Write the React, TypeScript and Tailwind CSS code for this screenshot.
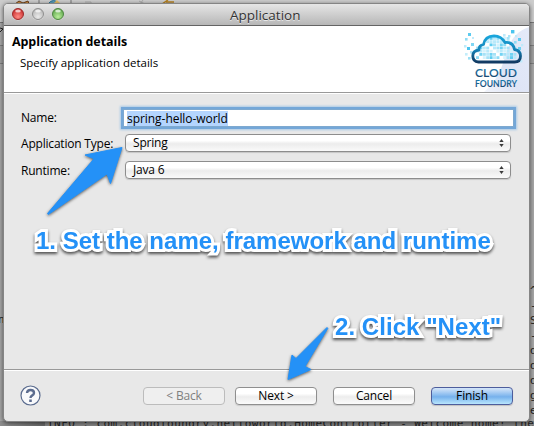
import React from "react";

const ui = "font-['Open_Sans','Noto_Sans',sans-serif] font-medium";

function TrafficLight({ x, rim, from, to }: { x: number; rim: string; from: string; to: string }) {
  const id = "light" + x;
  return (
    <g>
      <defs>
        <radialGradient id={id} cx="50%" cy="75%" r="70%">
          <stop offset="0" stopColor={to} />
          <stop offset="1" stopColor={from} />
        </radialGradient>
      </defs>
      <circle cx={x} cy="7.6" r="6" fill="#f4f4f4" opacity="0.6" />
      <circle cx={x} cy="7" r="5.5" fill={`url(#${id})`} stroke={rim} strokeWidth="1" />
      <ellipse cx={x} cy="4" rx="2.8" ry="1.5" fill="white" opacity="0.7" />
    </g>
  );
}

const pixels: [number, number, number, string][] = [
  [1, 9, 2.6, "#8fdcf5"], [4, 4, 3, "#5ccbf0"], [8, 8, 2, "#bfeafa"], [0, 16, 2.5, "#bdebfa"], [3, 18, 3, "#4cc4ee"],
  [7, 14, 3, "#7fd6f4"], [1, 24, 2.6, "#c4edfa"], [4, 28, 2.6, "#9adff5"], [6, 22, 2.5, "#b4e8f9"], [47, 1, 3.4, "#4cc4ee"],
  [44, 6, 2.4, "#a9e4f8"], [39, 5, 2.6, "#bfeafa"], [51, 6, 2.2, "#bfeafa"], [54, 9, 3, "#5ccbf0"], [50, 12, 2.6, "#8fdcf5"],
  [57, 15, 2.3, "#bfeafa"], [54, 18, 3, "#6ed1f2"], [56, 31, 2.4, "#bfeafa"],
];

const tones = ["#8edcf6", "#b9e9fa", "#5fcdf1", "#a5e2f7", "#d5f2fc", "#72d3f3"];

function CloudLogo() {
  const cells: React.ReactNode[] = [];
  for (let r = 0; r < 7; r++)
    for (let c = 0; c < 12; c++) {
      if (r < 3 && (c < 3 || c > 9)) continue;
      if ((r * 5 + c * 7) % 6 === 1) continue;
      cells.push(
        <rect key={r + "-" + c} x={13 + c * 3.4} y={11 + r * 3.2} width="3" height="2.8" fill={tones[(r * r + c * 5 + r * c) % 6]} />
      );
    }
  return (
    <svg className="block h-[66px] w-[66px]" viewBox="0 0 66 66">
      <defs>
        <linearGradient id="cloud" x1="0" y1="0" x2="0" y2="1">
          <stop offset="0" stopColor="#19a6dc" />
          <stop offset="0.55" stopColor="#1480b5" />
          <stop offset="1" stopColor="#123a63" />
        </linearGradient>
        <linearGradient id="corner" x1="1" y1="0" x2="0" y2="1">
          <stop offset="0" stopColor="#e4eaf8" />
          <stop offset="0.6" stopColor="#dfe5f6" />
          <stop offset="1" stopColor="#f1f4fb" />
        </linearGradient>
        <linearGradient id="word" x1="0" y1="0" x2="0" y2="1">
          <stop offset="0" stopColor="#1c86b8" />
          <stop offset="1" stopColor="#173f67" />
        </linearGradient>
      </defs>
      <path d="M66 1C54 5 47 14 43 28C38 44 34 55 21 66H66Z" fill="url(#corner)" />
      {pixels.map(([x, y, s, f]) => (
        <rect key={x + "." + y} x={x + 1} y={y + 3} width={s} height={s} fill={f} />
      ))}
      {cells}
      <path
        d="M15.500 36Q9.800 35.500 9.800 30Q9.800 24.500 16 24Q15.500 19.500 20.500 18.500Q22 10 31 9.800Q38.500 10 42 16.500Q50 15.500 51.500 23.500Q57.500 24.500 57.500 30Q57.500 36 51.500 36Z"
        fill="none"
        stroke="url(#cloud)"
        strokeWidth="2.800"
        strokeLinejoin="round"
      />
      <text x="12" y="51" textLength="42" lengthAdjust="spacingAndGlyphs" fontSize="11.500" fontWeight="600" fill="url(#word)" fontFamily="Lato, sans-serif">CLOUD</text>
      <text x="12" y="60.500" textLength="42" lengthAdjust="spacingAndGlyphs" fontSize="8.500" fontWeight="700" fill="url(#word)" fontFamily="Lato, sans-serif">FOUNDRY</text>
    </svg>
  );
}

function Select({ value }: { value: string }) {
  return (
    <div className="ml-[121px] flex h-[18px] w-[386px] items-center justify-between rounded-[4px] border border-[#8d8d8d] bg-linear-to-b from-white from-35% via-[#ececec] via-55% to-[#fafafa] pr-[6px] pl-[7px] shadow-[0_1px_1px_#c6c6c6]">
      <span className="text-[12px] leading-[16px] tracking-[-0.2px]">{value}</span>
      <svg className="h-[8px] w-[5px]" viewBox="0 0 5 8">
        <path d="M2.500 0L4.700 3H.3ZM2.500 8L4.700 5H.3Z" fill="#3a3a3a" />
      </svg>
    </div>
  );
}

function Button({ children, className }: { children: React.ReactNode; className: string }) {
  return (
    <div className={"flex h-[18px] w-[82px] items-center justify-center rounded-[4px] border text-[12px] leading-[16px] tracking-[-0.15px] " + className}>
      {children}
    </div>
  );
}

const plain = "border-[#8f8f8f] bg-linear-to-b from-white from-35% via-[#ededed] via-55% to-[#fbfbfb] shadow-[0_1px_1px_#cbcbcb]";

const note =
  "absolute whitespace-pre font-['Liberation_Sans',Arial,sans-serif] text-[24px] leading-[28px] font-bold text-[#2491f7] [-webkit-text-stroke:6px_white] [paint-order:stroke_fill] [stroke-linejoin:round] drop-shadow-[0_2px_1.5px_rgba(0,0,0,0.65)]";

const mono = "absolute font-['DejaVu_Sans_Mono',monospace] text-[11px] leading-[15px] whitespace-pre text-[#222]";

function Backdrop() {
  return (
    <>
      <div className="absolute inset-0 flex flex-col">
        <div className="h-[22px] bg-[#cccccc]" />
        <div className="h-[23px] border-t border-[#777] bg-[#a9a9a9]" />
        <div className="h-[19px] border-y border-[#7d7d7d] bg-[#a0a0a0]" />
        <div className="flex-1 bg-[#a6a6a6]" />
      </div>
      <svg className="absolute top-0 left-0 h-[32px] w-[180px]" viewBox="0 0 180 32">
        <path d="M15 4L19 1L23 3L28 1L29 4Z" fill="#c98d43" stroke="#6d3e17" />
        <path d="M48 4Q53 -3 60 4Z" fill="#5c9db8" stroke="#287294" />
        <path d="M53 4L57 0L61 4Z" fill="#e5bd66" />
        <path d="M39 0V4M71 0V4" stroke="#777" />
        <path d="M85 2H91V4M110 2H120M139 1L145 4M143 0L140 4" stroke="#aaa" fill="none" />
        <path d="M162 4L168 0M166 2H174" stroke="#b48020" strokeWidth="1.500" />
        <path d="M0 28L3 29L0 32" stroke="#222" fill="none" />
      </svg>
      <div className={mono + " top-[283px] left-[530px]"}>{"^\n-\nS\n-\nd\nd\nd\ng\ne"}</div>
      <div className={mono + " top-[312px] left-[-2px] text-[#5c4a3d]"}>n</div>
      <div className="absolute top-[421px] left-0 h-[5px] w-[45px] bg-linear-to-r from-[#8e8e8e] to-[#666]" />
      <div className="absolute top-[421px] left-[45px] h-[5px] w-[489px] bg-[#858585]" />
      <div className={mono + " top-[416px] left-[47px] tracking-[0.44px]"}>{"INFO : com.cloudfoundry.helloworld.HomeController - Welcome home! the"}</div>
    </>
  );
}

export default function App() {
  return (
    <div className={"relative h-[426px] w-[534px] overflow-hidden text-black " + ui}>
      <Backdrop />
      <div className="absolute top-[3px] left-[3px] flex h-[419px] w-[527px] flex-col overflow-hidden rounded-[5px] border border-[#858585] bg-[#e8e8e8] shadow-[0_1px_4px_rgba(0,0,0,0.55)]">
        <div className="flex h-[22px] shrink-0 items-center border-b border-[#646464] bg-linear-to-b from-[#e6e6e6] to-[#b7b7b7]">
          <svg className="mb-[1px] ml-[7px] h-[14px] w-[54px]" viewBox="0 0 54 14">
            <TrafficLight x={7} rim="#9b2b2b" from="#c62a2a" to="#ff8b84" />
            <TrafficLight x={27} rim="#8e8e8e" from="#b5b5b5" to="#eaeaea" />
            <TrafficLight x={47} rim="#4d8440" from="#5da44b" to="#b9ee9a" />
          </svg>
          <span className="ml-[165px] text-[13.500px] leading-[20px] text-[#333] [text-shadow:0_1px_0_#e8e8e8]">Application</span>
        </div>
        <div className="flex h-[68px] shrink-0 justify-between border-b border-b-white bg-white shadow-[inset_0_-1px_0_#999]">
          <div className="pt-[7px] pl-[8px]">
            <div className="text-[12.500px] leading-[18px] font-bold tracking-[-0.08px]">Application details</div>
            <div className="mt-[4px] pl-[8px] text-[11.500px] leading-[16px]">Specify application details</div>
          </div>
          <CloudLogo />
        </div>
        <div className="flex h-[275px] shrink-0 flex-col text-[12px] tracking-[-0.2px]">
          <div className="mt-[15px] flex h-[18px] items-center pl-[17px]">
            <span className="w-[102px]">Name:</span>
            <div className="flex h-[18px] w-[391px] items-center border border-[#7ea9cf] bg-white pl-[3px] shadow-[0_0_0_2px_#74a7d8,0_0_2px_3px_#a9c9e6]">
              <span className="bg-[#b4d5fe] leading-[15px] tracking-[-0.05px]">spring-hello-world</span>
            </div>
          </div>
          <div className="mt-[7px] flex pl-[17px]">
            <span className="mt-[1px] -mr-[121px] w-[104px] leading-[18px] whitespace-nowrap">Application Type:</span>
            <Select value="Spring" />
          </div>
          <div className="mt-[8px] flex pl-[17px]">
            <span className="mt-[1px] -mr-[121px] w-[104px] leading-[18px]">Runtime:</span>
            <Select value="Java 6" />
          </div>
        </div>
        <div className="flex flex-1 items-start border-t border-[#999] pt-[17px] pl-[16px] shadow-[inset_0_1px_0_white]">
          <svg className="-mt-[2px] h-[22px] w-[22px]" viewBox="0 0 22 22">
            <circle cx="10.500" cy="10.500" r="9.500" fill="#f8f9fb" stroke="#5b6c8f" strokeWidth="1.200" />
            <path d="M7 8Q7.300 5 10.500 5Q14 5 14 8Q14 9.500 12 10.600Q10.500 11.500 10.500 13" fill="none" stroke="#5b6c8f" strokeWidth="2.400" />
            <rect x="9.200" y="14.500" width="2.600" height="2.500" fill="#5b6c8f" />
          </svg>
          <Button className="ml-[101px] border-[#bcbcbc] bg-[#efefef] text-[#808080]">&lt; Back</Button>
          <Button className={"ml-[10px] " + plain}>Next &gt;</Button>
          <Button className={"ml-[16px] " + plain}>Cancel</Button>
          <Button className="ml-[16px] border-[#4d5d9c] bg-linear-to-b from-[#cfe2f8] from-5% via-[#76b1ec] via-55% to-[#b9e6fd] shadow-[0_1px_1px_#c0c0c0]">Finish</Button>
        </div>
      </div>
      <svg className="absolute inset-0 h-[426px] w-[534px] drop-shadow-[0_1px_1.5px_rgba(0,0,0,0.6)]" viewBox="0 0 534 426">
        <g fill="#2491f7" stroke="#2491f7" strokeWidth="1" strokeLinejoin="round">
          <path d="M122 147.500L85 155L94 158.800L47.500 213.500L48.300 214.500L107 174L110.500 183.500Z" />
          <path d="M288 379.500L292 355L296 358.500L327 327.500L327.800 328.300L305 366.500L311 369.500Z" />
        </g>
      </svg>
      <div className={note + " top-[227px] left-[36px]"}>1. Set the name, framework and runtime</div>
      <div className={note + " top-[313px] left-[335px] tracking-[0.05px]"}>2. Click "Next"</div>
    </div>
  );
}
